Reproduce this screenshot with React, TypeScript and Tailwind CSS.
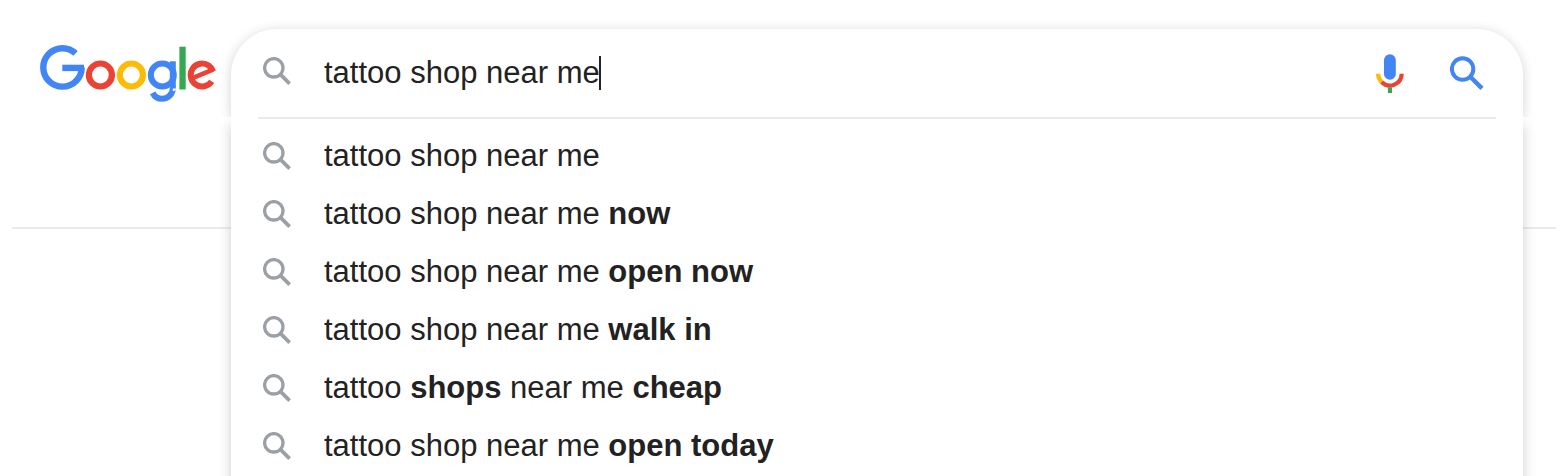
import React, { useState } from 'react';

interface Part {
  text: string;
  bold?: boolean;
}

const SUGGESTIONS: Part[][] = [
  [{ text: 'tattoo shop near me' }],
  [{ text: 'tattoo shop near me ' }, { text: 'now', bold: true }],
  [{ text: 'tattoo shop near me ' }, { text: 'open now', bold: true }],
  [{ text: 'tattoo shop near me ' }, { text: 'walk in', bold: true }],
  [
    { text: 'tattoo ' },
    { text: 'shops', bold: true },
    { text: ' near me ' },
    { text: 'cheap', bold: true },
  ],
  [{ text: 'tattoo shop near me ' }, { text: 'open today', bold: true }],
];

const Logo: React.FC = () => (
  <svg width="176" height="59" viewBox="40 44 176 59" fill="none" role="img" aria-label="Google">
    <g stroke="#4285f4" strokeWidth="6.4">
      <circle cx="62.5" cy="67.4" r="19.2" pathLength={360} strokeDasharray="313 47" />
      <line x1="62.3" y1="67.9" x2="84" y2="67.9" />
    </g>
    <circle cx="100.4" cy="75" r="11.5" stroke="#ea4335" strokeWidth="6.2" />
    <circle cx="131.4" cy="75" r="11.5" stroke="#fbbc05" strokeWidth="6.2" />
    <g stroke="#4285f4" strokeWidth="6">
      <circle cx="162.3" cy="75" r="11.5" />
      <line x1="172.8" y1="61.3" x2="172.8" y2="88.5" />
      <circle cx="162.2" cy="88.2" r="10.6" pathLength={360} strokeDasharray="154 206" />
    </g>
    <rect x="179.4" y="46.7" width="6.3" height="42.8" fill="#34a853" />
    <g stroke="#ea4335">
      <circle
        cx="202.2"
        cy="75"
        r="11.5"
        strokeWidth="6"
        pathLength={360}
        strokeDasharray="308 52"
        transform="rotate(34 202.2 75)"
      />
      <line x1="192" y1="78.4" x2="213.4" y2="69.4" strokeWidth="4.6" />
    </g>
  </svg>
);

const SuggestIcon: React.FC = () => (
  <svg className="shrink-0" width="29" height="29" viewBox="0 0 29 29" fill="none" stroke="#9aa0a6">
    <circle cx="10.8" cy="10.8" r="9.2" strokeWidth="3.3" />
    <line x1="17.4" y1="17.4" x2="26.6" y2="26.6" strokeWidth="3.7" />
  </svg>
);

const SearchIcon: React.FC = () => (
  <svg width="34" height="34" viewBox="0 0 34 34" fill="none" stroke="#4285f4">
    <circle cx="12.6" cy="13" r="10.7" strokeWidth="4" />
    <line x1="20.8" y1="21.2" x2="32" y2="32.4" strokeWidth="4.4" />
  </svg>
);

const MicIcon: React.FC = () => (
  <svg width="28" height="40" viewBox="0 0 28 40" fill="none">
    <rect x="8" y="1.2" width="11.8" height="25.6" rx="5.9" fill="#4285f4" />
    <path d="M2.1 20.8A11.8 11.8 0 0 0 5.6 29.1" stroke="#fbbc05" strokeWidth="4.2" />
    <path d="M5.6 29.1A11.8 11.8 0 0 0 25.7 20.8" stroke="#ea4335" strokeWidth="4.2" />
    <rect x="11.9" y="34.4" width="4.1" height="5.6" fill="#34a853" />
  </svg>
);

export default function App() {
  const [query, setQuery] = useState('tattoo shop near me');

  return (
    <div className="h-screen overflow-hidden bg-white font-['Liberation_Sans',Arial,sans-serif] text-[31px] leading-9 text-[#222222]">
      {/* The suggestion panel hangs over the header's bottom rule */}
      <header className="ml-3 flex h-[229px] items-start border-b-2 border-[#ebebeb] pr-[33px] pl-7">
        <a href="#" className="mt-11 shrink-0">
          <Logo />
        </a>

        <form
          role="search"
          className="relative z-10 mt-[29px] ml-[15px] min-w-0 flex-1"
          onSubmit={(e) => e.preventDefault()}
        >
          <div className="flex h-[88px] items-center rounded-t-[46px] bg-white pr-[39px] pl-8 shadow-[0_2px_12px_rgba(32,33,36,0.2)] [clip-path:inset(-20px_-20px_0_-20px)]">
            <label className="flex min-w-0 flex-1 cursor-text items-center gap-8">
              <span className="mb-1">
                <SuggestIcon />
              </span>
              <span className="flex min-w-0 items-center">
                <input
                  type="text"
                  aria-label="Search"
                  autoComplete="off"
                  value={query}
                  onChange={(e) => setQuery(e.target.value)}
                  className="field-sizing-content max-w-full min-w-0 bg-transparent caret-transparent outline-none"
                />
                <span className="-ml-px h-[34px] w-0.5 shrink-0 bg-[#222222]" />
              </span>
            </label>
            <button type="button" aria-label="Search by voice" className="mr-[46px] shrink-0">
              <MicIcon />
            </button>
            <button type="submit" aria-label="Google Search" className="shrink-0">
              <SearchIcon />
            </button>
          </div>

          <div className="bg-white pb-4 shadow-[0_8px_12px_rgba(32,33,36,0.22)]">
            <div className="mx-[27px] h-0.5 bg-[#e8eaed]" />
            <ul className="pt-2">
              {SUGGESTIONS.map((parts, i) => (
                <li key={i}>
                  <button
                    type="button"
                    onClick={() => setQuery(parts.map((p) => p.text).join(''))}
                    className="flex h-[58px] w-full items-center gap-8 pl-8 text-left"
                  >
                    <SuggestIcon />
                    <span className="whitespace-pre">
                      {parts.map((p, j) =>
                        p.bold ? <b key={j}>{p.text}</b> : <span key={j}>{p.text}</span>
                      )}
                    </span>
                  </button>
                </li>
              ))}
            </ul>
          </div>
        </form>
      </header>
    </div>
  );
}
